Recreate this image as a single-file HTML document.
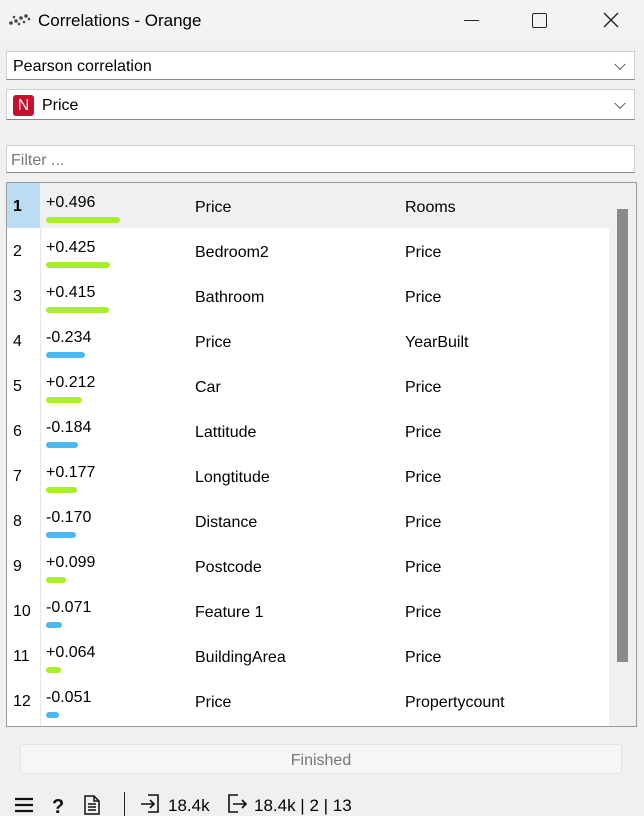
<!DOCTYPE html><html><head><style>
body{margin:0;width:644px;height:816px;background:#f0f0f0;font-family:"Liberation Sans",sans-serif;position:relative;overflow:hidden;color:#000}
.a{position:absolute}
.box{position:absolute;left:6px;width:629px;background:#fff;border:1px solid #d0d0d0;border-bottom:1px solid #888;box-sizing:border-box;font-size:16px}
.chev{position:absolute;right:10px;top:50%;width:7px;height:7px;border-right:1px solid #555;border-bottom:1px solid #555;transform:translateY(-70%) rotate(45deg)}
.row{position:absolute;left:0;width:602px;height:45px;font-size:16px}
.n{position:absolute;left:0;width:33px;height:45px;line-height:47px;padding-left:6px;box-sizing:border-box}
.v{position:absolute;left:39px;top:11px}
.b{position:absolute;left:39px;top:34px;height:6px;border-radius:3px}
.c2{position:absolute;left:188px;top:16px}
.c3{position:absolute;left:398px;top:16px}
</style></head><body>
<div class="a" style="left:0;top:0;width:644px;height:40px;background:#f3f3f3"></div>
<svg class="a" style="left:9px;top:13px" width="22" height="14"><g fill="#444"><circle cx="2" cy="10" r="1.8"/><circle cx="7" cy="8" r="1.8"/><circle cx="12" cy="5" r="1.8"/><circle cx="17" cy="3" r="1.8"/><circle cx="5" cy="4" r="1.3"/><circle cx="10" cy="11" r="1.3"/><circle cx="15" cy="9" r="1.3"/><circle cx="20" cy="6" r="1.3"/></g></svg>
<div class="a" style="left:38px;top:11px;font-size:17px">Correlations - Orange</div>
<div class="a" style="left:464px;top:20px;width:15px;height:1px;background:#222"></div>
<div class="a" style="left:532px;top:13px;width:13px;height:13px;border:1.5px solid #222;border-radius:2px"></div>
<svg class="a" style="left:603px;top:12px" width="16" height="16"><path d="M1 1L15 15M15 1L1 15" stroke="#222" stroke-width="1.4"/></svg>
<div class="box" style="top:51px;height:29px;line-height:30px;padding-left:6px">Pearson correlation<div class="chev"></div></div>
<div class="box" style="top:89px;height:31px;line-height:32px;padding-left:35px"><div class="a" style="left:6px;top:5px;width:21px;height:21px;background:#c8102e;border-radius:3px;color:#fff;text-align:center;line-height:21px;font-size:16px">N</div>Price<div class="chev"></div></div>
<div class="box" style="top:145px;height:28px;line-height:29px;padding-left:4px;color:#777">Filter ...</div>
<div class="a" style="left:6px;top:182px;width:631px;height:545px;background:#fff;border:1px solid #999;box-sizing:border-box">
<div class="a" style="left:33px;top:0;width:1px;height:543px;background:#e5e5e5"></div>
<div class="a" style="left:602px;top:0;width:27px;height:543px;background:#f0f0f0"></div>
<div class="a" style="left:610px;top:26px;width:11px;height:453px;background:#8a8a8a"></div>
<div class="row" style="top:0;background:#f0f0f0"><div class="n" style="background:#bcdcf4;font-weight:bold">1</div><div class="v">+0.496</div><div class="b" style="width:74px;background:#a6ef2a"></div><div class="c2">Price</div><div class="c3">Rooms</div></div>
<div class="row" style="top:45px"><div class="n">2</div><div class="v">+0.425</div><div class="b" style="width:64px;background:#a6ef2a"></div><div class="c2">Bedroom2</div><div class="c3">Price</div></div>
<div class="row" style="top:90px"><div class="n">3</div><div class="v">+0.415</div><div class="b" style="width:63px;background:#a6ef2a"></div><div class="c2">Bathroom</div><div class="c3">Price</div></div>
<div class="row" style="top:135px"><div class="n">4</div><div class="v">-0.234</div><div class="b" style="width:39px;background:#4cb8f0"></div><div class="c2">Price</div><div class="c3">YearBuilt</div></div>
<div class="row" style="top:180px"><div class="n">5</div><div class="v">+0.212</div><div class="b" style="width:36px;background:#a6ef2a"></div><div class="c2">Car</div><div class="c3">Price</div></div>
<div class="row" style="top:225px"><div class="n">6</div><div class="v">-0.184</div><div class="b" style="width:32px;background:#4cb8f0"></div><div class="c2">Lattitude</div><div class="c3">Price</div></div>
<div class="row" style="top:270px"><div class="n">7</div><div class="v">+0.177</div><div class="b" style="width:31px;background:#a6ef2a"></div><div class="c2">Longtitude</div><div class="c3">Price</div></div>
<div class="row" style="top:315px"><div class="n">8</div><div class="v">-0.170</div><div class="b" style="width:30px;background:#4cb8f0"></div><div class="c2">Distance</div><div class="c3">Price</div></div>
<div class="row" style="top:360px"><div class="n">9</div><div class="v">+0.099</div><div class="b" style="width:20px;background:#a6ef2a"></div><div class="c2">Postcode</div><div class="c3">Price</div></div>
<div class="row" style="top:405px"><div class="n">10</div><div class="v">-0.071</div><div class="b" style="width:16px;background:#4cb8f0"></div><div class="c2">Feature 1</div><div class="c3">Price</div></div>
<div class="row" style="top:450px"><div class="n">11</div><div class="v">+0.064</div><div class="b" style="width:15px;background:#a6ef2a"></div><div class="c2">BuildingArea</div><div class="c3">Price</div></div>
<div class="row" style="top:495px"><div class="n">12</div><div class="v">-0.051</div><div class="b" style="width:13px;background:#4cb8f0"></div><div class="c2">Price</div><div class="c3">Propertycount</div></div>
</div>
<div class="a" style="left:20px;top:744px;width:602px;height:30px;background:#f6f6f6;border:1px solid #e2e2e2;border-radius:3px;box-sizing:border-box;text-align:center;line-height:31px;color:#777;font-size:16px">Finished</div>
<svg class="a" style="left:12px;top:794px" width="100" height="22"><g stroke="#111" stroke-width="2.2" fill="none"><path d="M3 5H21M3 11H21M3 17H21"/></g>
<text x="40" y="19" font-size="20" font-family="Liberation Sans" font-weight="bold" fill="#111">?</text>
<g stroke="#111" stroke-width="1.5" fill="none"><path d="M73 2H82L87 7V20H73Z M82 2V7H87 M76 10H84M76 13H84M76 16H84"/></g></svg>
<div class="a" style="left:124px;top:792px;width:1px;height:24px;background:#222"></div>
<svg class="a" style="left:140px;top:794px" width="22" height="20"><path d="M8 1H18V18H8M1 10H14M10 6L14 10L10 14" stroke="#111" stroke-width="1.6" fill="none"/></svg>
<div class="a" style="left:168px;top:796px;font-size:17px">18.4k</div>
<svg class="a" style="left:227px;top:794px" width="22" height="20"><path d="M11 1H2V18H11M6 10H19M15 6L19 10L15 14" stroke="#111" stroke-width="1.6" fill="none"/></svg>
<div class="a" style="left:254px;top:796px;font-size:17px">18.4k | 2 | 13</div>
</body></html>
